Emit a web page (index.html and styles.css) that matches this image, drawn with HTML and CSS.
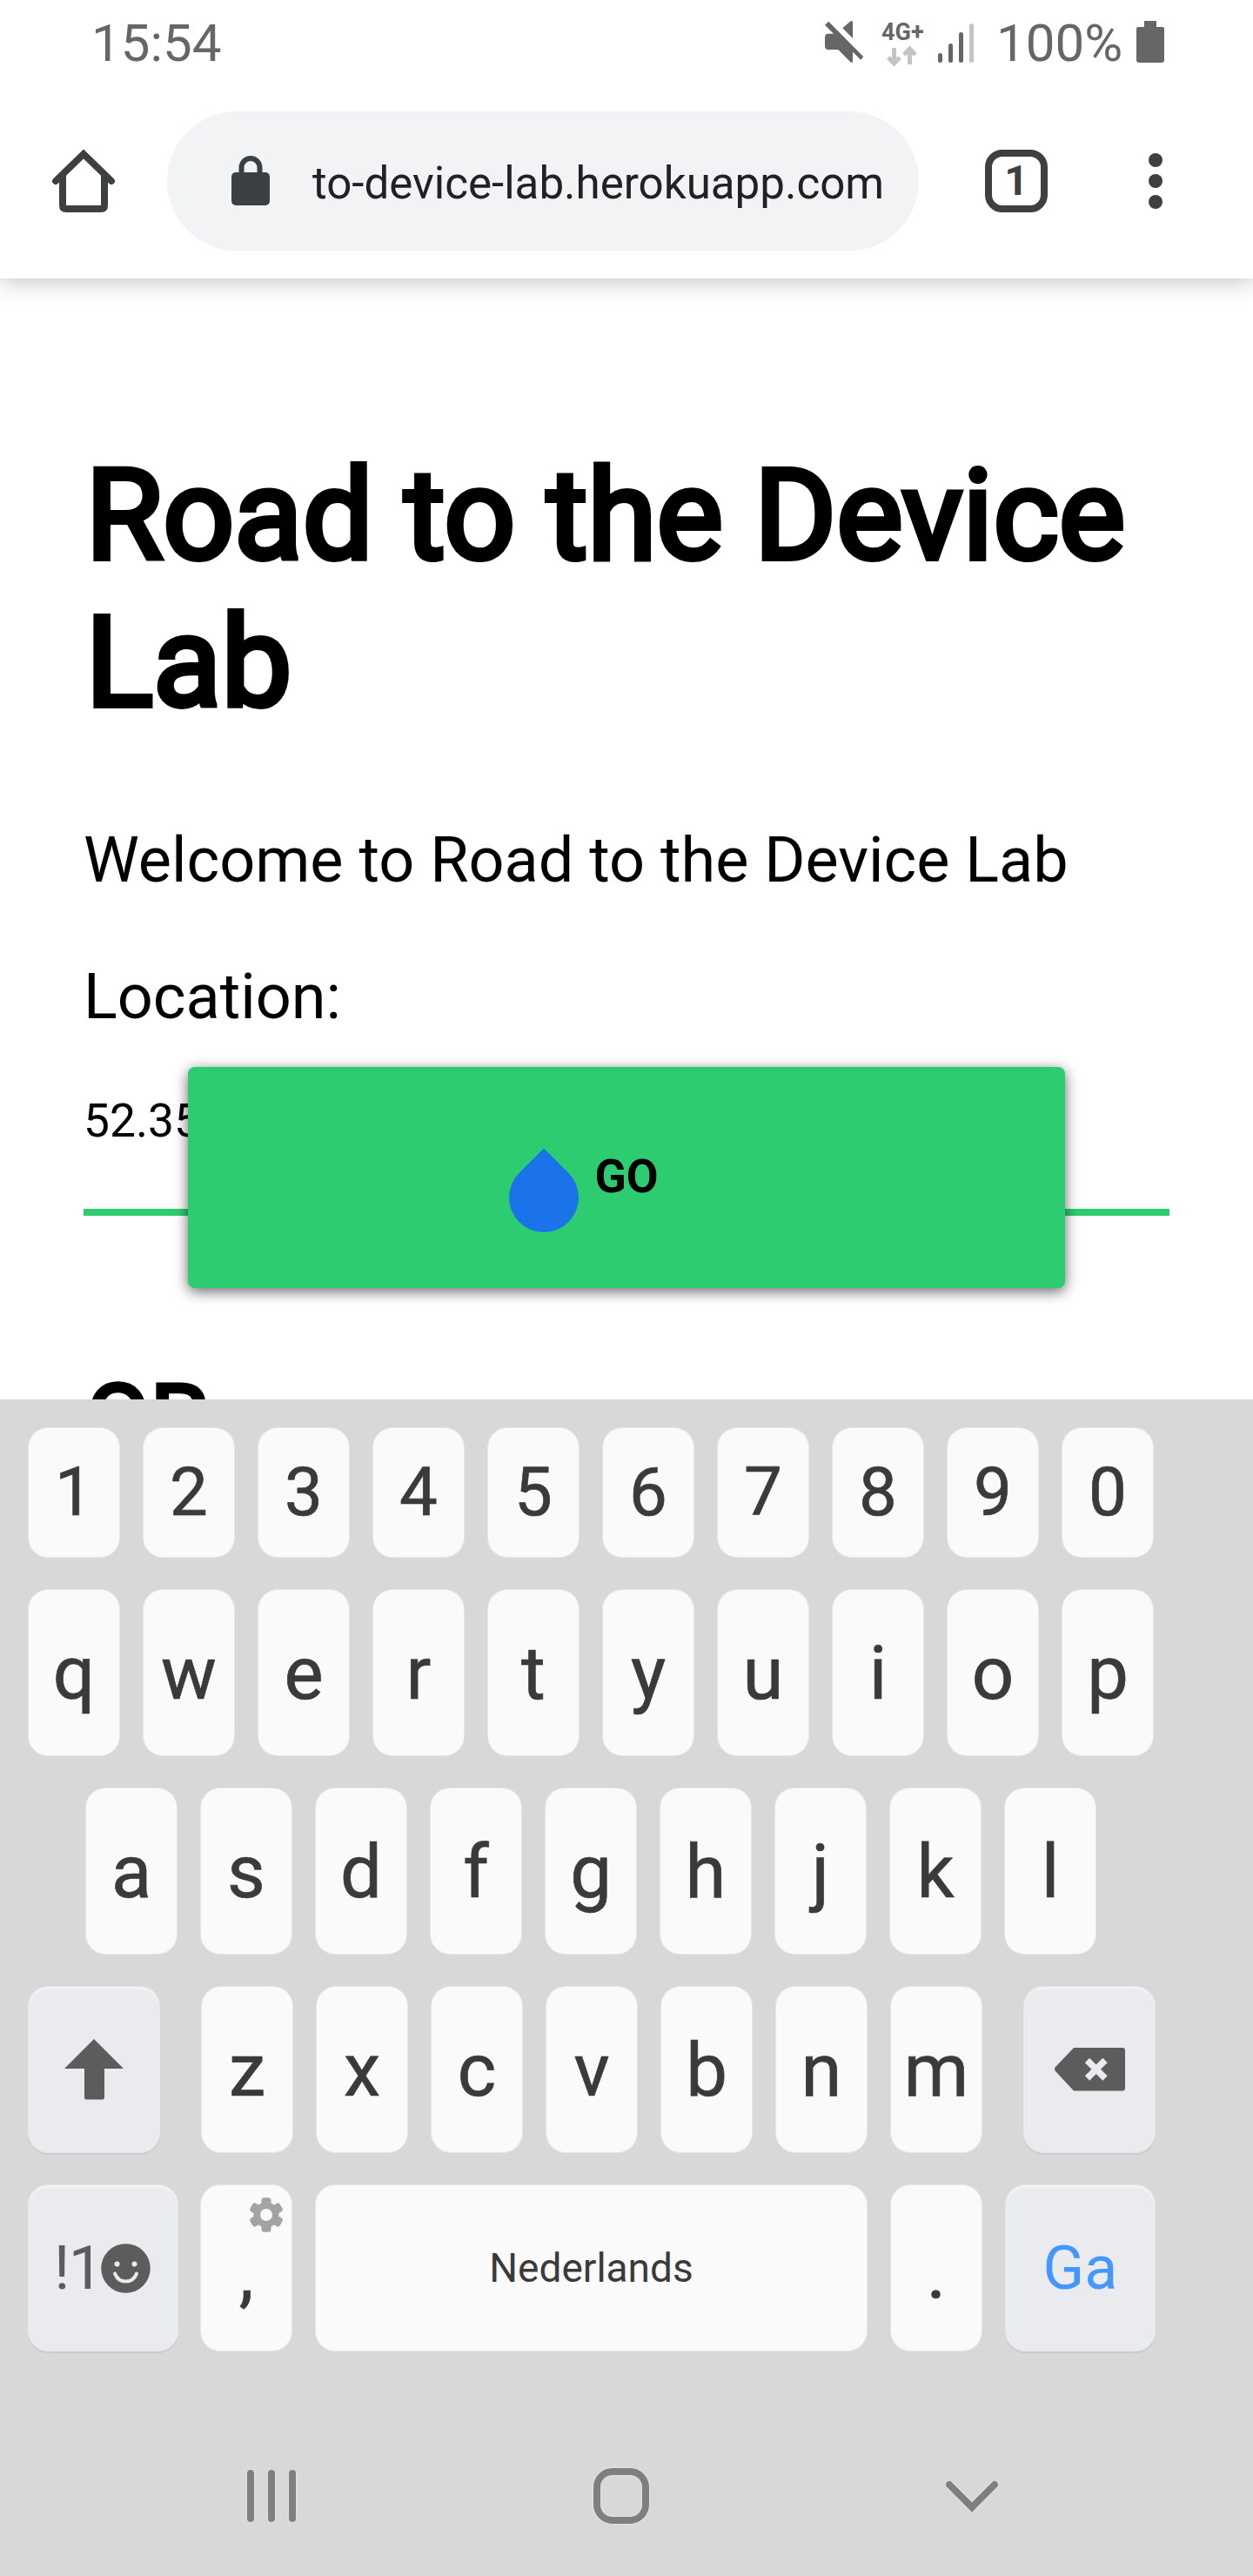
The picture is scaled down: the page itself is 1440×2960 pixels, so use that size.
FILE: index.html
```html
<!DOCTYPE html>
<html lang="en">
<head>
<meta charset="utf-8">
<title>Road to the Device Lab</title>
<link rel="stylesheet" href="styles.css">
</head>
<body>
<div class="status">
  <span class="clock">15:54</span>
  <svg class="mute" viewBox="0 0 44 48" width="44" height="48"><path d="M4.300 .7L44.300 41.300L41 44.700L32 35.500V46.500Q32 48.500 29.700 47.500L15.300 33H4Q0 33 0 29V18.700Q0 14.700 4 14.700H10L0 4.700Z"/><path d="M32 1V20L20.300 8.300L29 .7Q31.500 -.8 32 1Z"/></svg>
  <span class="network"><b>4G+</b><svg viewBox="0 0 34 23" width="34" height="23"><path d="M8.500 2V20M2 13L8.500 20L15 13M26.500 21V3M20 10L26.500 3L33 10"/></svg></span>
  <svg class="signal" viewBox="0 0 42 46" width="42" height="46"><rect y="35" width="5" height="11" rx="2.500"/><rect x="12" y="24" width="5" height="22" rx="2.500"/><rect x="24" y="11" width="5" height="35" rx="2.500"/><rect class="off" x="36" y="1" width="5" height="45" rx="2.500"/></svg>
  <span class="percent">100%</span>
  <svg class="battery" viewBox="0 0 32 48" width="32" height="48"><path d="M9 0H23V7H30Q32 7 32 9V45Q32 48 29 48H3Q0 48 0 45V9Q0 7 2 7H9Z"/></svg>
</div>
<div class="toolbar">
  <svg class="home" viewBox="0 0 72 72" width="72" height="72"><path d="M4 36L36 5L68 36"/><path d="M12 30V64Q12 68 16 68H56Q60 68 60 64V30"/></svg>
  <div class="omnibox">
    <svg class="lock" viewBox="0 0 44 58" width="44" height="58"><rect y="19" width="44" height="38" rx="5"/><path d="M11.500 22V13.500A10.500 10.500 0 0 1 32.500 13.500V22"/></svg>
    <span>to-device-lab.herokuapp.com</span>
  </div>
  <div class="tabs">1</div>
  <svg class="dots" viewBox="0 0 16 64" width="16" height="64"><circle cx="8" cy="8" r="8"/><circle cx="8" cy="32" r="8"/><circle cx="8" cy="56" r="8"/></svg>
</div>
<main class="page">
  <h1>Road to the Device Lab</h1>
  <p class="welcome">Welcome to Road to the Device Lab</p>
  <p class="label">Location:</p>
  <div class="field">52.35</div>
  <h2>OR</h2>
  <button class="go">GO</button>
  <div class="handle"></div>
</main>
<div class="keyboard">
  <div class="row numbers"><kbd>1</kbd><kbd>2</kbd><kbd>3</kbd><kbd>4</kbd><kbd>5</kbd><kbd>6</kbd><kbd>7</kbd><kbd>8</kbd><kbd>9</kbd><kbd>0</kbd></div>
  <div class="row"><kbd>q</kbd><kbd>w</kbd><kbd>e</kbd><kbd>r</kbd><kbd>t</kbd><kbd>y</kbd><kbd>u</kbd><kbd>i</kbd><kbd>o</kbd><kbd>p</kbd></div>
  <div class="row middle"><kbd>a</kbd><kbd>s</kbd><kbd>d</kbd><kbd>f</kbd><kbd>g</kbd><kbd>h</kbd><kbd>j</kbd><kbd>k</kbd><kbd>l</kbd></div>
  <div class="row">
    <kbd class="fn shift"><svg viewBox="0 0 68 70" width="68" height="70"><path d="M34 0L68 34H46V67Q46 69.500 43.500 69.500H25.500Q23 69.500 23 67V34H0Z"/></svg></kbd>
    <kbd>z</kbd><kbd>x</kbd><kbd>c</kbd><kbd>v</kbd><kbd>b</kbd><kbd>n</kbd><kbd>m</kbd>
    <kbd class="fn erase"><svg viewBox="0 0 81 50" width="81" height="50"><path d="M22 0H78Q81 0 81 3V46Q81 49.500 78 49.500H22L1 27Q-1 24.500 1 22Z"/><path class="cross" d="M37.500 14.500L58 35M58 14.500L37.500 35"/></svg></kbd>
  </div>
  <div class="row last">
    <kbd class="fn symbols"><span>!1</span><svg viewBox="0 0 57 57" width="57" height="57"><circle cx="28.500" cy="28.500" r="28.300"/><g class="face"><circle cx="18.500" cy="23.500" r="3"/><circle cx="38.500" cy="23.500" r="3"/><path d="M16 34.500Q19.500 43.500 28.500 43.500T41 34.500"/></g></svg></kbd>
    <kbd class="comma">,<svg class="gear" viewBox="-20 -20 40 40" width="40" height="40"><g><circle r="14.500"/><g id="tooth"><rect x="-5.500" y="-19.700" width="11" height="12" rx="3"/><rect x="-5.500" y="7.700" width="11" height="12" rx="3"/></g><use href="#tooth" transform="rotate(60)"/><use href="#tooth" transform="rotate(120)"/></g><circle class="hole" r="7"/></svg></kbd>
    <kbd class="space">Nederlands</kbd>
    <kbd class="period">.</kbd>
    <kbd class="fn enter">Ga</kbd>
  </div>
  <div class="nav">
    <svg viewBox="0 0 60 64" width="60" height="64"><path d="M6 6V58M30 6V58M54 6V58"/></svg>
    <svg viewBox="0 0 68 68" width="68" height="68"><rect x="6" y="6" width="56" height="56" rx="18"/></svg>
    <svg viewBox="0 0 64 40" width="64" height="40"><path d="M6 7L32 33L58 7"/></svg>
  </div>
</div>
</body>
</html>
```
FILE: styles.css
```css
* { box-sizing: border-box; }
body {
  margin: 0;
  width: 1440px;
  height: 2960px;
  overflow: hidden;
  background: #fff;
  color: #000;
  font-family: Roboto, sans-serif;
}
svg { display: block; flex: none; overflow: visible; }
h1, h2, p { margin: 0; }

.status {
  display: flex;
  align-items: flex-start;
  height: 96px;
  padding: 24px 102px 0 105px;
  color: #666;
  fill: #666;
  font-size: 60px;
  line-height: 70px;
}
.clock, .percent { margin-top: -9px; }
.mute { margin-left: auto; }
.network { width: 50px; margin-left: 21px; }
.network b { display: block; height: 29px; font-size: 27px; line-height: 27px; }
.network svg { margin-left: 6px; fill: none; stroke: #c4c4c4; stroke-width: 5; }
.signal { margin: 2px 25px 0 15px; }
.signal .off { fill: #c4c4c4; }
.percent { width: 145px; margin-right: 16px; }

.toolbar {
  position: relative;
  display: flex;
  align-items: center;
  height: 224px;
  padding: 0 104px 0 60px;
  box-shadow: 0 0 28px rgba(0, 0, 0, .3);
  clip-path: inset(0 0 -34px 0);
}
.home { fill: none; stroke: #3c4043; stroke-width: 8; stroke-linecap: round; }
.omnibox {
  display: flex;
  align-items: center;
  width: 864px;
  height: 160px;
  margin: 0 76px 0 60px;
  padding-left: 74px;
  border-radius: 80px;
  background: #f1f3f4;
  color: #202124;
  font-size: 51.100px;
}
.omnibox span { margin: 4px 0 0 49px; white-space: nowrap; }
.lock { fill: #3c4043; }
.lock path { fill: none; stroke: #3c4043; stroke-width: 6; }
.tabs {
  width: 72px;
  height: 72px;
  border: 8px solid #3c4043;
  border-radius: 20px;
  color: #3c4043;
  font-size: 48px;
  font-weight: 700;
  line-height: 56px;
  text-align: center;
}
.dots { margin-left: auto; fill: #3c4043; }

.page { position: relative; height: 1288px; padding: 188px 96px 0; overflow: hidden; }
h1, h2 { padding-left: 2.500px; font-weight: 400; -webkit-text-stroke: 6px #000; }
h1 { font-size: 144px; line-height: 169px; }
h2 { margin-top: 170px; font-size: 108px; line-height: 126px; -webkit-text-stroke-width: 4.500px; }
.welcome { margin-top: 101px; font-size: 72px; line-height: 84px; }
.label { margin-top: 73px; font-size: 72px; line-height: 84px; }
.field { height: 209px; padding-top: 69px; border-bottom: 8px solid #2ecc71; font-size: 53.330px; line-height: 62px; }
.go {
  position: absolute;
  left: 216px;
  top: 906px;
  width: 1008px;
  height: 254px;
  padding: 0 0 3px;
  border: 0;
  border-radius: 8px;
  background: #2ecc71;
  box-shadow: 0 4px 16px rgba(0, 0, 0, .6);
  color: #000;
  font: 700 53.330px/62px Roboto, sans-serif;
}
.handle {
  position: absolute;
  left: 585px;
  top: 1016px;
  width: 80px;
  height: 80px;
  border-radius: 0 40px 40px 40px;
  background: #1a73e8;
  transform: rotate(45deg);
}

.keyboard {
  position: relative;
  display: flex;
  flex-direction: column;
  gap: 36px;
  height: 1352px;
  padding: 32px 112px 0 32px;
  background: #d8d8d8;
}
.row { display: flex; gap: 26px; height: 192px; }
.row.numbers { height: 150px; }
.row.middle { padding-left: 66px; }
kbd {
  position: relative;
  display: flex;
  align-items: center;
  justify-content: center;
  flex: none;
  width: 106px;
  padding-top: 1px;
  border: 1px solid #e6e6e6;
  border-radius: 23px;
  background: #fafafa;
  color: #3a3a3a;
  font: 400 85px/100px Roboto, sans-serif;
  -webkit-text-stroke: .7px;
}
.numbers kbd { padding-top: 0; font-size: 78px; }
kbd.fn {
  padding: 0;
  background: #e9ebef;
  box-shadow: 0 2px 0 #cbcccf, inset 0 3px 2px #f2f3f5;
  color: #5c5c5c;
  fill: #5c5c5c;
  -webkit-text-stroke: 0;
}
.shift { width: 152px; margin-right: 21px; }
.erase { width: 152px; margin-left: 21px; }
.cross { stroke: #e9ebef; stroke-width: 7.500; }
kbd.symbols { justify-content: flex-start; padding-left: 29px; width: 173px; font-size: 71px; }
.symbols span { width: 54px; letter-spacing: -1.500px; }
.face { fill: #e9ebef; }
.face path { fill: none; stroke: #e9ebef; stroke-width: 4; stroke-linecap: round; }
.gear { position: absolute; left: 55px; top: 14px; fill: #a3a3a3; }
.gear .hole { fill: #fafafa; }
kbd.comma, kbd.period { padding-top: 11px; }
kbd.space { width: 635px; padding: 0; font-size: 46px; -webkit-text-stroke: 0; }
kbd.enter { width: 173px; color: #4497ff; font-size: 70px; }
.last kbd:first-child { margin-right: -1px; }

.nav {
  display: flex;
  align-items: center;
  justify-content: space-between;
  width: 867px;
  height: 68px;
  margin: 96px 0 0 250px;
  fill: none;
  stroke: #7f7f7f;
  stroke-width: 8;
  stroke-linecap: round;
  filter: drop-shadow(0 0 1px #f4f4f4);
}
```
